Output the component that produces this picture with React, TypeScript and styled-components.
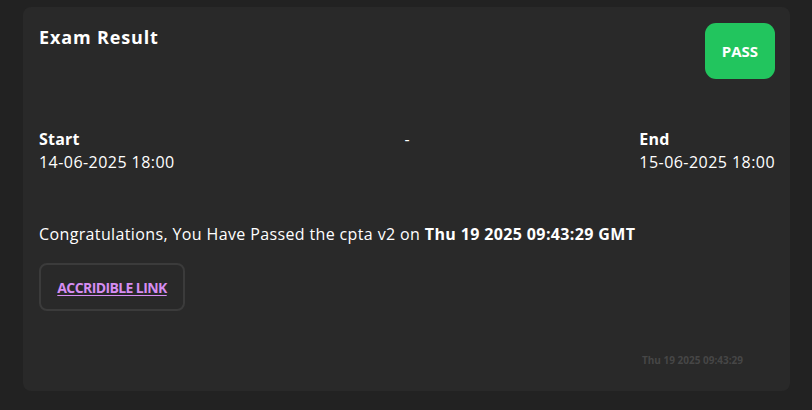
import React from "react";
import styled, { createGlobalStyle } from "styled-components";

const Global = createGlobalStyle`
  html, body { margin: 0; padding: 0; background: #222222; }
  body { font-family: "Open Sans", "DejaVu Sans", sans-serif; color: #ffffff; }
  * { box-sizing: border-box; }
`;

const Page = styled.div`
  width: 812px;
  height: 410px;
  padding: 7px 22px 19px 23px;
`;

const Card = styled.section`
  background: #292929;
  border-radius: 8px;
  height: 384px;
  padding: 16px 15px 16px 16px;
  display: flex;
  flex-direction: column;
`;

const Header = styled.div`
  display: flex;
  justify-content: space-between;
  align-items: flex-start;
`;

const Title = styled.h2`
  margin: 0;
  margin-top: 2px;
  font-size: 18px;
  font-weight: 700;
  line-height: 24px;
  letter-spacing: 0.85px;
`;

const Badge = styled.div`
  width: 70px;
  height: 56px;
  border-radius: 11px;
  background: #22c55e;
  display: flex;
  align-items: center;
  justify-content: center;
  font-weight: 700;
  font-size: 15px;
`;

const Range = styled.div`
  display: flex;
  justify-content: space-between;
  align-items: flex-start;
  margin-top: 49px;
`;

const Col = styled.div`
  display: flex;
  flex-direction: column;
  align-items: flex-start;
`;

const Label = styled.div`
  font-size: 16px;
  font-weight: 700;
  line-height: 22px;
  letter-spacing: 0.2px;
`;

const Value = styled.div`
  font-size: 16px;
  font-weight: 400;
  line-height: 24px;
  letter-spacing: 0.45px;
`;

const Dash = styled.div`
  font-size: 16px;
  line-height: 22px;
`;

const Message = styled.p`
  margin: 48px 0 0;
  font-size: 16px;
  line-height: 24px;
  letter-spacing: 0.37px;
  strong { font-weight: 700; }
`;

const LinkBox = styled.div`
  margin-top: 17px;
  align-self: flex-start;
  width: 146px;
  height: 48px;
  border: 2px solid #3b3b3b;
  border-radius: 8px;
  display: flex;
  align-items: center;
  justify-content: center;
`;

const Link = styled.a`
  color: #d58df2;
  font-size: 14px;
  font-weight: 700;
  letter-spacing: -0.6px;
  text-decoration: underline;
  text-underline-offset: 2px;
`;

const Stamp = styled.div`
  margin-top: auto;
  margin-bottom: 8px;
  align-self: flex-end;
  margin-right: 32px;
  font-size: 10px;
  font-weight: 700;
  color: #464646;
  letter-spacing: 0px;
`;

export default function App() {
  return (
    <>
      <Global />
      <Page>
        <Card>
          <Header>
            <Title>Exam Result</Title>
            <Badge>PASS</Badge>
          </Header>
          <Range>
            <Col>
              <Label>Start</Label>
              <Value>14-06-2025 18:00</Value>
            </Col>
            <Dash>-</Dash>
            <Col>
              <Label>End</Label>
              <Value>15-06-2025 18:00</Value>
            </Col>
          </Range>
          <Message>
            Congratulations, You Have Passed the cpta v2 on{" "}
            <strong>Thu 19 2025 09:43:29 GMT</strong>
          </Message>
          <LinkBox>
            <Link href="#">ACCRIDIBLE LINK</Link>
          </LinkBox>
          <Stamp>Thu 19 2025 09:43:29</Stamp>
        </Card>
      </Page>
    </>
  );
}
